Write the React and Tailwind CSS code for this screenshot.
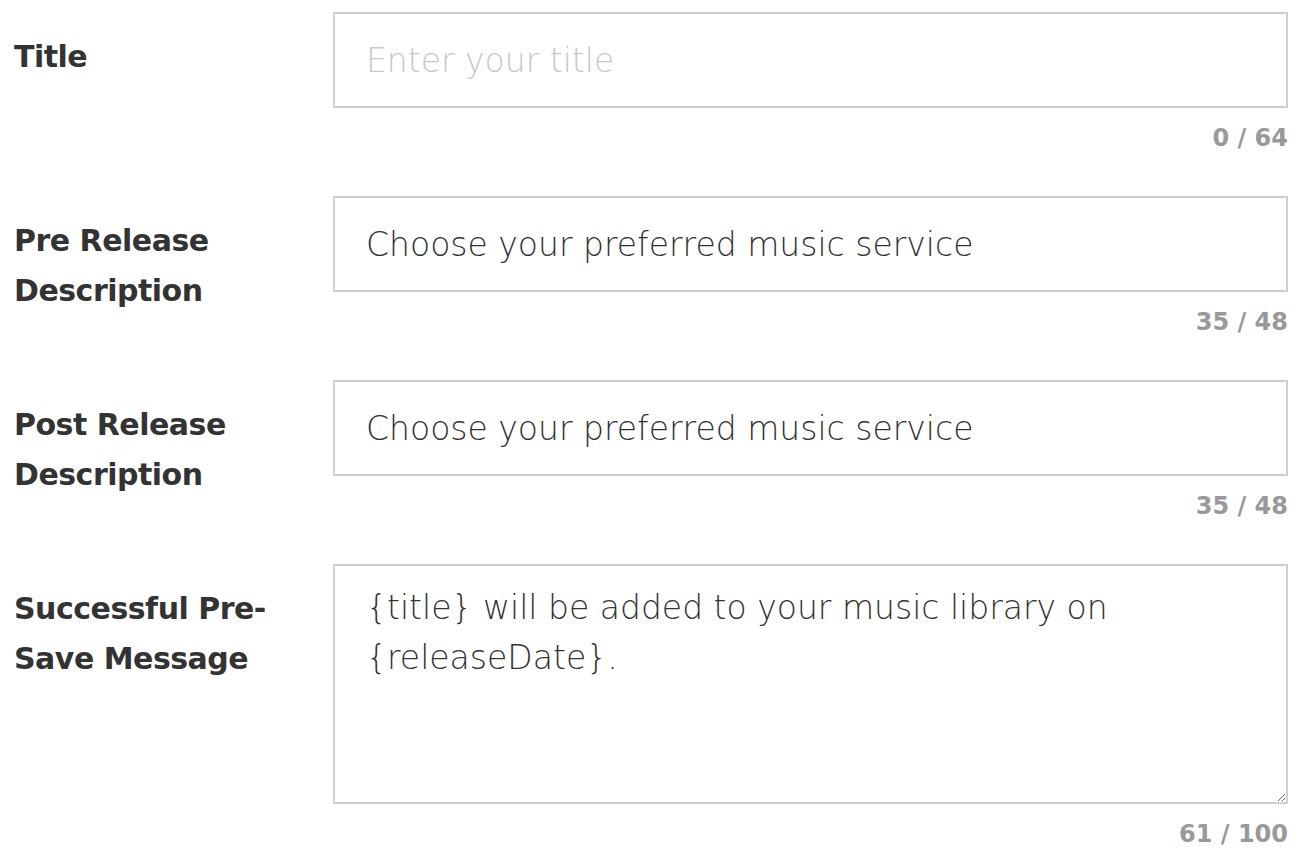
import React from "react";

function Field({ label, children, counter }) {
  return (
    <div className="flex">
      <div className="w-[319px] shrink-0 pt-[20px] text-[30px] leading-[50px] font-bold tracking-[-0.5px] text-[#333333]">
        {label}
      </div>
      <div className="flex-1 flex flex-col">
        {children}
        <div className="mt-[15px] text-right text-[24px] leading-[30px] font-bold text-[#999999]">{counter}</div>
      </div>
    </div>
  );
}

const inputCls =
  "block w-full h-[96px] border-2 border-[#cfcfcf] bg-white px-[31px] text-[33px] font-extralight text-[#333333] placeholder:text-[#c8c8c8] outline-none";

export default function App() {
  return (
    <div className="bg-white min-h-[858px] w-[1311px] pl-[14px] pr-[23px] pt-[12px] font-['DejaVu_Sans',sans-serif]">
      <div className="flex flex-col gap-[43px]">
        <Field label="Title" counter="0 / 64">
          <input className={inputCls} placeholder="Enter your title" readOnly />
        </Field>
        <Field label={<>Pre Release<br />Description</>} counter="35 / 48">
          <input className={inputCls} defaultValue="Choose your preferred music service" readOnly />
        </Field>
        <Field label={<>Post Release<br />Description</>} counter="35 / 48">
          <input className={inputCls} defaultValue="Choose your preferred music service" readOnly />
        </Field>
        <Field label={<>Successful Pre-<br />Save Message</>} counter="61 / 100">
          <textarea
            readOnly
            defaultValue="{title} will be added to your music library on {releaseDate}."
            className="block w-full h-[240px] border-2 border-[#cfcfcf] bg-white px-[31px] pt-[17px] text-[33px] leading-[50px] font-extralight text-[#333333] outline-none resize-y"
          />
        </Field>
      </div>
    </div>
  );
}
